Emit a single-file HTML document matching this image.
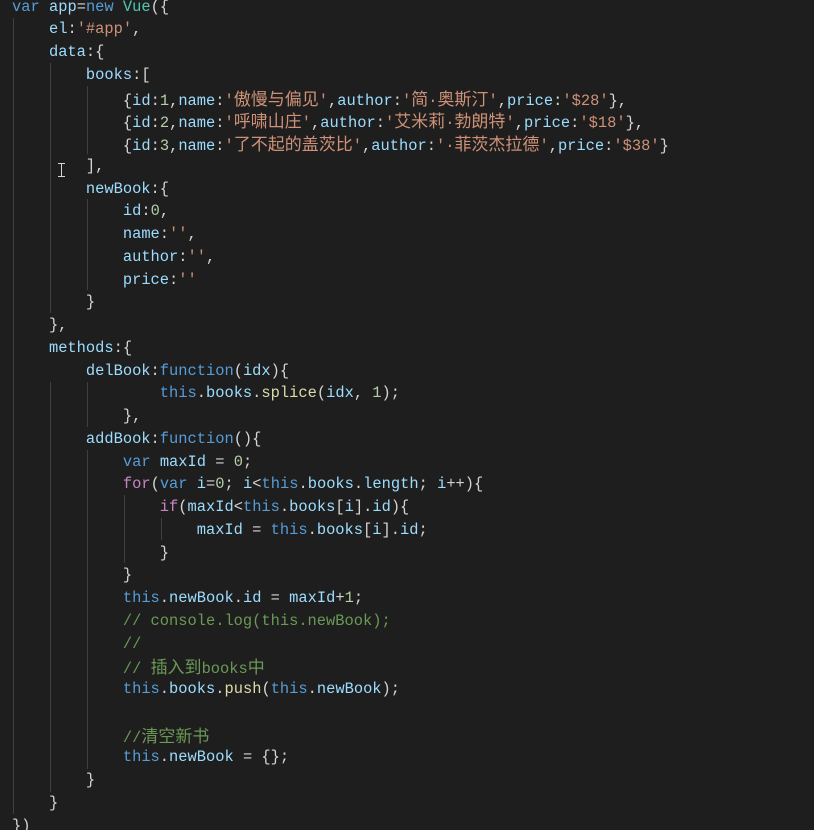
<!DOCTYPE html>
<html><head><meta charset="utf-8">
<style>
html,body{margin:0;padding:0;background:#1e1e1e;width:814px;height:830px;overflow:hidden;position:relative}
.l{position:absolute;left:12px;height:22.75px;line-height:22.75px;white-space:pre;font-family:"Liberation Mono","Noto Sans CJK SC",monospace;font-size:15.4px;color:#d4d4d4}
.c{font-family:"Noto Sans CJK SC",sans-serif;font-size:17px}
.d{font-family:"Liberation Mono",monospace;font-size:15.4px}
.k{color:#569cd6}.p{color:#9cdcfe}.s{color:#ce9178}.n{color:#b5cea8}.f{color:#dcdcaa}.t{color:#4ec9b0}.m{color:#6a9955}.q{color:#c586c0}
.g{position:absolute;width:1px;background:#404040}
</style></head><body>
<div class="g" style="left:13px;top:18px;height:796px"></div>
<div class="g" style="left:50px;top:63px;height:250px"></div>
<div class="g" style="left:50px;top:382px;height:410px"></div>
<div class="g" style="left:87px;top:86px;height:68px"></div>
<div class="g" style="left:87px;top:199px;height:91px"></div>
<div class="g" style="left:87px;top:382px;height:45px"></div>
<div class="g" style="left:87px;top:450px;height:319px"></div>
<div class="g" style="left:124px;top:495px;height:68px"></div>
<div class="g" style="left:161px;top:518px;height:22px"></div>
<div class="l" style="top:-4.4px"><span class="k">var</span> <span class="p">app</span>=<span class="k">new</span> <span class="t">Vue</span>({</div>
<div class="l" style="top:18.4px">    <span class="p">el</span>:<span class="s">'#app'</span>,</div>
<div class="l" style="top:41.1px">    <span class="p">data</span>:{</div>
<div class="l" style="top:63.9px">        <span class="p">books</span>:[</div>
<div class="l" style="top:86.6px">            {<span class="p">id</span>:<span class="n">1</span>,<span class="p">name</span>:<span class="s">'<span class="c">傲慢与偏见</span>'</span>,<span class="p">author</span>:<span class="s">'<span class="c">简</span><span class="d">·</span><span class="c">奥斯汀</span>'</span>,<span class="p">price</span>:<span class="s">'$28'</span>},</div>
<div class="l" style="top:109.4px">            {<span class="p">id</span>:<span class="n">2</span>,<span class="p">name</span>:<span class="s">'<span class="c">呼啸山庄</span>'</span>,<span class="p">author</span>:<span class="s">'<span class="c">艾米莉</span><span class="d">·</span><span class="c">勃朗特</span>'</span>,<span class="p">price</span>:<span class="s">'$18'</span>},</div>
<div class="l" style="top:132.1px">            {<span class="p">id</span>:<span class="n">3</span>,<span class="p">name</span>:<span class="s">'<span class="c">了不起的盖茨比</span>'</span>,<span class="p">author</span>:<span class="s">'<span class="d">·</span><span class="c">菲茨杰拉德</span>'</span>,<span class="p">price</span>:<span class="s">'$38'</span>}</div>
<div class="l" style="top:154.9px">        ],</div>
<div class="l" style="top:177.6px">        <span class="p">newBook</span>:{</div>
<div class="l" style="top:200.4px">            <span class="p">id</span>:<span class="n">0</span>,</div>
<div class="l" style="top:223.1px">            <span class="p">name</span>:<span class="s">''</span>,</div>
<div class="l" style="top:245.9px">            <span class="p">author</span>:<span class="s">''</span>,</div>
<div class="l" style="top:268.6px">            <span class="p">price</span>:<span class="s">''</span></div>
<div class="l" style="top:291.4px">        }</div>
<div class="l" style="top:314.1px">    },</div>
<div class="l" style="top:336.9px">    <span class="p">methods</span>:{</div>
<div class="l" style="top:359.6px">        <span class="p">delBook</span>:<span class="k">function</span>(<span class="p">idx</span>){</div>
<div class="l" style="top:382.4px">                <span class="k">this</span>.<span class="p">books</span>.<span class="f">splice</span>(<span class="p">idx</span>, <span class="n">1</span>);</div>
<div class="l" style="top:405.1px">            },</div>
<div class="l" style="top:427.9px">        <span class="p">addBook</span>:<span class="k">function</span>(){</div>
<div class="l" style="top:450.6px">            <span class="k">var</span> <span class="p">maxId</span> = <span class="n">0</span>;</div>
<div class="l" style="top:473.4px">            <span class="q">for</span>(<span class="k">var</span> <span class="p">i</span>=<span class="n">0</span>; <span class="p">i</span>&lt;<span class="k">this</span>.<span class="p">books</span>.<span class="p">length</span>; <span class="p">i</span>++){</div>
<div class="l" style="top:496.1px">                <span class="q">if</span>(<span class="p">maxId</span>&lt;<span class="k">this</span>.<span class="p">books</span>[<span class="p">i</span>].<span class="p">id</span>){</div>
<div class="l" style="top:518.9px">                    <span class="p">maxId</span> = <span class="k">this</span>.<span class="p">books</span>[<span class="p">i</span>].<span class="p">id</span>;</div>
<div class="l" style="top:541.6px">                }</div>
<div class="l" style="top:564.4px">            }</div>
<div class="l" style="top:587.1px">            <span class="k">this</span>.<span class="p">newBook</span>.<span class="p">id</span> = <span class="p">maxId</span>+<span class="n">1</span>;</div>
<div class="l" style="top:609.9px">            <span class="m">// console.log(this.newBook);</span></div>
<div class="l" style="top:632.6px">            <span class="m">//</span></div>
<div class="l" style="top:655.4px">            <span class="m">// <span class="c">插入到</span>books<span class="c">中</span></span></div>
<div class="l" style="top:678.1px">            <span class="k">this</span>.<span class="p">books</span>.<span class="f">push</span>(<span class="k">this</span>.<span class="p">newBook</span>);</div>
<div class="l" style="top:723.6px">            <span class="m">//<span class="c">清空新书</span></span></div>
<div class="l" style="top:746.4px">            <span class="k">this</span>.<span class="p">newBook</span> = {};</div>
<div class="l" style="top:769.1px">        }</div>
<div class="l" style="top:791.9px">    }</div>
<div class="l" style="top:814.6px">})</div>
<div style="position:absolute;left:61px;top:163px;width:1px;height:14px;background:#d4d4d4"></div>
<div style="position:absolute;left:58px;top:163px;width:7px;height:1px;background:#d4d4d4"></div>
<div style="position:absolute;left:58px;top:176px;width:7px;height:1px;background:#d4d4d4"></div>
</body></html>
